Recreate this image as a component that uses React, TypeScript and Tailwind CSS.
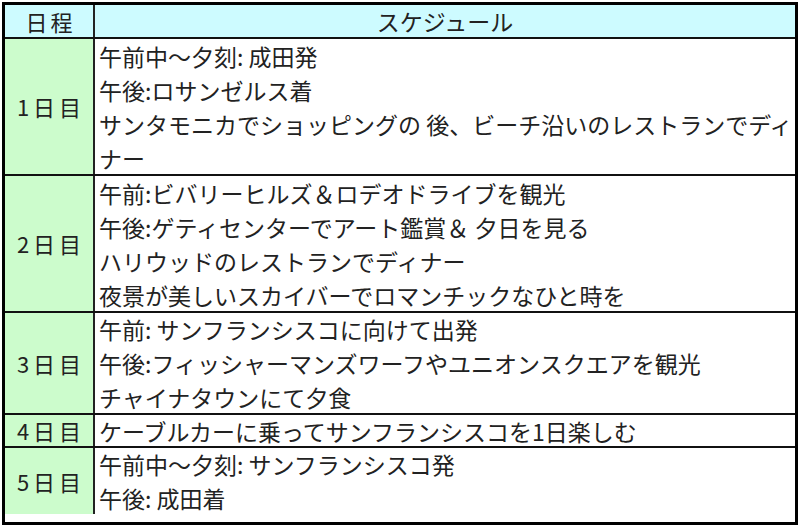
const rows = [
    {
        day: '1日目',
        h: 'h-[137px]',
        lines: [
            '午前中～夕刻: 成田発',
            '午後:ロサンゼルス着',
            'サンタモニカでショッピングの 後、ビーチ沿いのレストランでディ',
            'ナー',
        ],
    },
    {
        day: '2日目',
        h: 'h-[137px]',
        lines: [
            '午前:ビバリーヒルズ＆ロデオドライブを観光',
            '午後:ゲティセンターでアート鑑賞＆ 夕日を見る',
            'ハリウッドのレストランでディナー',
            '夜景が美しいスカイバーでロマンチックなひと時を',
        ],
    },
    {
        day: '3日目',
        h: 'h-[102px]',
        lines: [
            '午前: サンフランシスコに向けて出発',
            '午後:フィッシャーマンズワーフやユニオンスクエアを観光',
            'チャイナタウンにて夕食',
        ],
    },
    {
        day: '4日目',
        h: 'h-[33px]',
        lines: ['ケーブルカーに乗ってサンフランシスコを1日楽しむ'],
    },
    {
        day: '5日目',
        h: 'h-[66px]',
        lines: ['午前中～夕刻: サンフランシスコ発', '午後: 成田着'],
    },
]

export default function App() {
    return (
        <div className="w-[800px] h-[527px] bg-white pt-[2px] pl-[2px] font-['Noto_Sans_CJK_JP',sans-serif] text-[#222]">
            <div className="w-[796px] h-[523px] border-[3px] border-black flex flex-col overflow-hidden">

                {/* Header */}
                <div className="flex h-[34px] border-b-2 border-[#111] bg-[#cdfbff] shrink-0">
                    <div className="w-[90px] border-r-2 border-[#222] flex items-center justify-center text-[22px] leading-none tracking-[3px] pl-[3px]">
                        日程
                    </div>
                    <div className="flex-1 flex items-center justify-center text-[23px] leading-none">
                        スケジュール
                    </div>
                </div>

                {rows.map((row, i) => (
                    <div
                        key={row.day}
                        className={`flex shrink-0 ${row.h} ${i < rows.length - 1 ? 'border-b-2 border-[#111]' : ''}`}
                    >
                        <div className="w-[90px] border-r-2 border-[#222] bg-[#ccfccc] flex items-center justify-center text-[22px] tracking-[4px] pl-[4px]">
                            {row.day}
                        </div>
                        <div className="flex-1 pl-[4px] text-[23px] leading-[34px] whitespace-nowrap overflow-hidden flex flex-col justify-center">
                            {row.lines.map((l) => (
                                <div key={l} className="h-[34px] shrink-0 flex items-center">{l}</div>
                            ))}
                        </div>
                    </div>
                ))}
            </div>
        </div>
    )
}
